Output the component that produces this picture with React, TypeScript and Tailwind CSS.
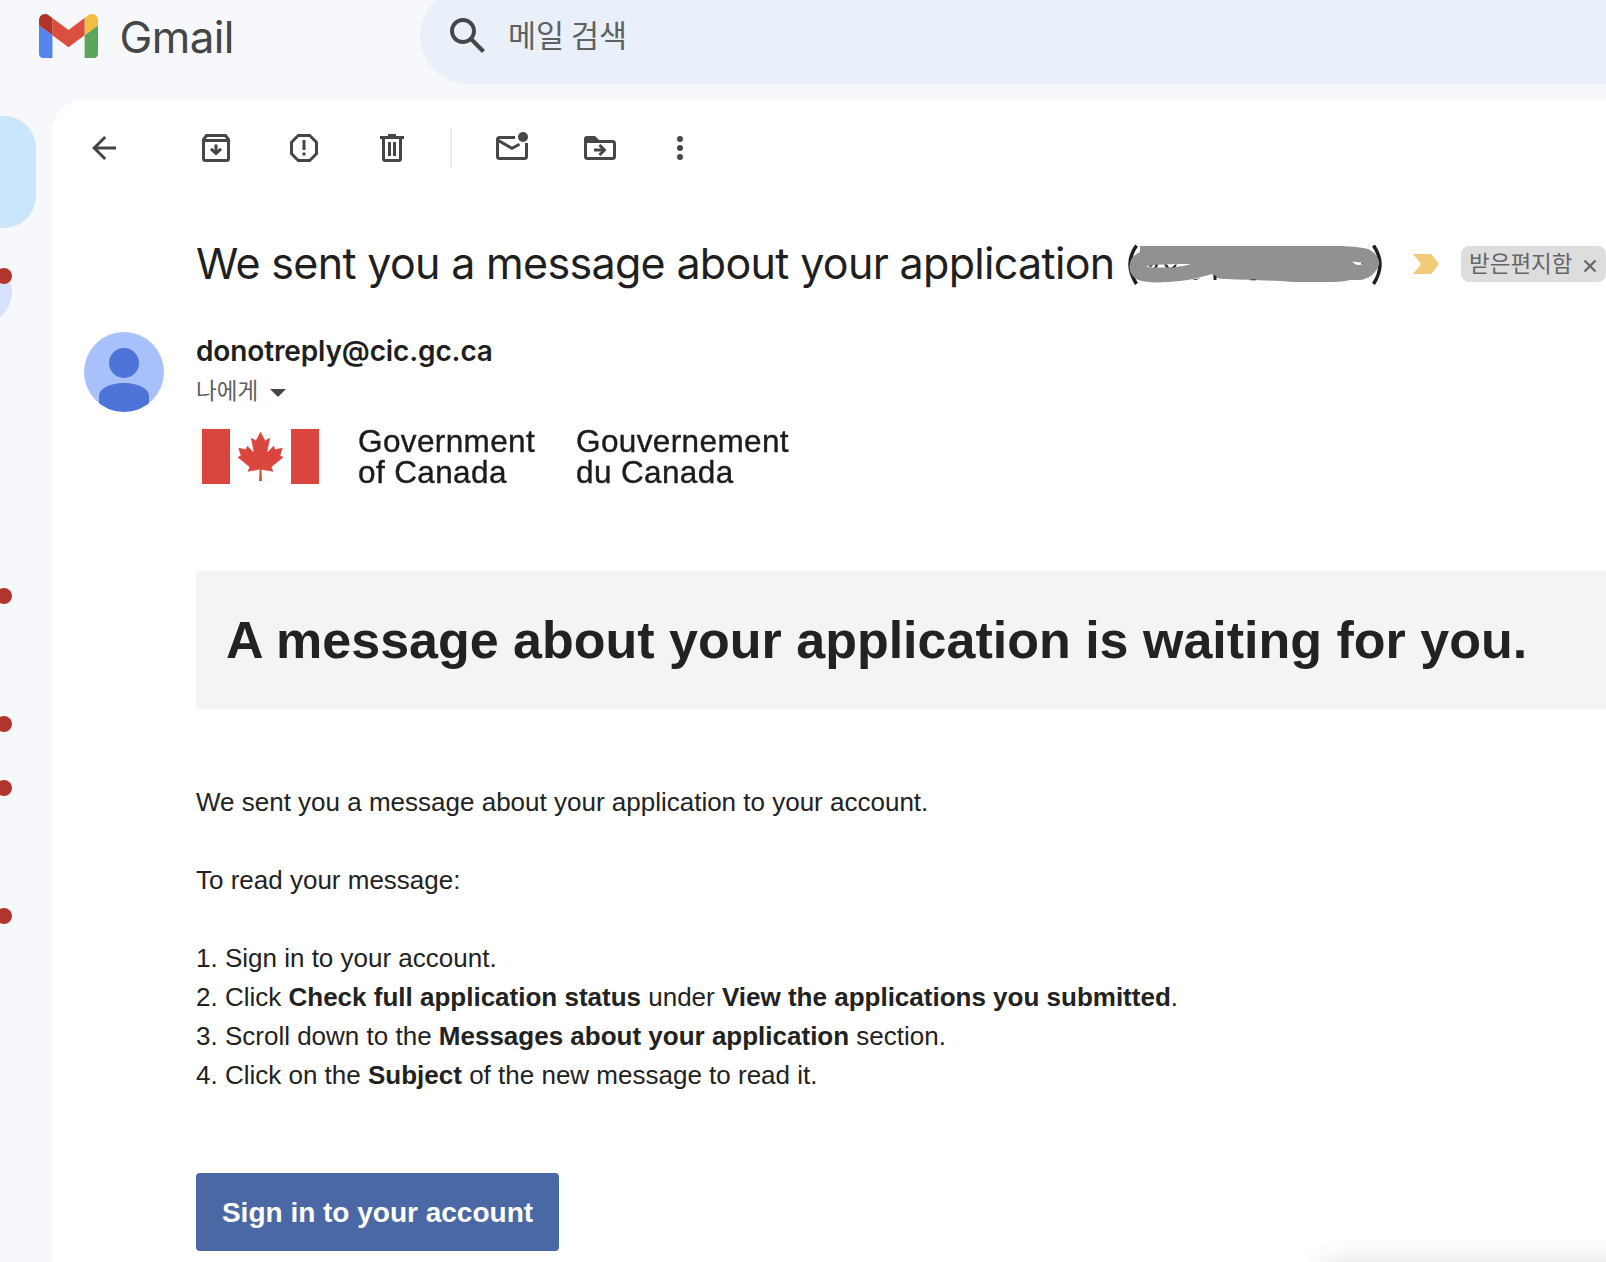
// Gmail message view: cropped sidebar, search bar, toolbar and the IRCC notification mail
import type { ReactNode } from 'react'
import clsx from 'clsx'

// ─── Data ────────────────────────────────────────────────────────────────────

// rows of the collapsed rail that carry an unread dot
const railRows = [true, false, false, false, false, true, false, true, true, false, true]

const steps: ReactNode[] = [
  <>Sign in to your account.</>,
  <>Click <b>Check full application status</b> under <b>View the applications you submitted</b>.</>,
  <>Scroll down to the <b>Messages about your application</b> section.</>,
  <>Click on the <b>Subject</b> of the new message to read it.</>,
]

// ─── Icons ───────────────────────────────────────────────────────────────────

function Icon({ children, label }: { children: ReactNode; label: string }) {
  return (
    <button aria-label={label} className="h-10 w-10 shrink-0 text-[#444746]">
      <svg viewBox="0 0 40 40" className="h-10 w-10 overflow-visible" fill="none" stroke="currentColor" strokeWidth="3">
        {children}
      </svg>
    </button>
  )
}

function GmailLogo() {
  return (
    <svg viewBox="52 42 88 66" className="h-11 w-[59px]" preserveAspectRatio="none">
      <path fill="#5585ee" d="M58 108h14V74L52 59v43c0 3.32 2.69 6 6 6" />
      <path fill="#5ca55c" d="M120 108h14c3.32 0 6-2.69 6-6V59l-20 15" />
      <path fill="#f2bf41" d="M120 48v26l20-15v-8c0-7.42-8.47-11.65-14.4-7.2" />
      <path fill="#da4f3f" d="M72 74V48l24 18 24-18v26L96 92" />
      <path fill="#b23328" d="M52 51v8l20 15V48l-5.6-4.2c-5.94-4.45-14.4-.22-14.4 7.2" />
    </svg>
  )
}

function Flag() {
  return (
    <div className="flex h-[55px] w-[117px] items-center justify-between bg-white blur-[0.4px]">
      <div className="h-full w-7 bg-[#da453e]" />
      <svg viewBox="540 370 3720 4060" className="h-[49px] w-[45px]" fill="#da453e" stroke="#da453e" strokeWidth="60">
        <path d="m2490 4430-45-863a95 95 0 0 1 111-98l859 151-116-320a65 65 0 0 1 20-73l941-762-212-99a65 65 0 0 1-34-79l186-572-542 115a65 65 0 0 1-73-38l-105-247-423 454a65 65 0 0 1-111-57l204-1052-327 189a65 65 0 0 1-91-27l-332-652-332 652a65 65 0 0 1-91 27l-327-189 204 1052a65 65 0 0 1-111 57l-423-454-105 247a65 65 0 0 1-73 38l-542-115 186 572a65 65 0 0 1-34 79l-212 99 941 762a65 65 0 0 1 20 73l-116 320 859-151a95 95 0 0 1 111 98l-45 863z" />
      </svg>
      <div className="h-full w-7 bg-[#da453e]" />
    </div>
  )
}

function Avatar() {
  return (
    <svg viewBox="0 0 80 80" className="h-20 w-20 shrink-0">
      <defs>
        <clipPath id="avatar">
          <circle cx="40" cy="40" r="40" />
        </clipPath>
      </defs>
      <g clipPath="url(#avatar)">
        <rect width="80" height="80" fill="#a8c1fb" />
        <circle cx="40" cy="31" r="15" fill="#4e73d9" />
        <path d="M15 80V64c0-8 12-13 25-13s25 5 25 13v16z" fill="#4e73d9" />
      </g>
    </svg>
  )
}

// application number, scribbled over
function Redacted() {
  return (
    <svg viewBox="0 0 254 40" className="absolute left-0 top-[2px] h-10 w-[254px]">
      <path
        d="M12 0H208C222 0 232 1 240 3C248 7 252 13 251 19C248 27 241 33 232 34H222C214 36 206 36 198 36H165C140 34 118 34 98 33C90 33 86 31 84 28C74 31 62 34 52 35C34 37 19 37 10 34C1 29 0 21 3 14C5 10 8 8 12 6Z"
        fill="#919191"
      />
      <path d="M19 20C33 18 50 18 63 18C50 22 34 22 19 21Z" fill="#fff" />
      <path d="M20 20l5-1-2 2zM28 18.500l-2 3h3l1-3zM36 18.500l2 3h3l-2-3zM47 18.500l-3 3h3l2-3z" fill="#222" />
      <path d="M224 15.500q6 1 11 1q0 2.500-5 2.500q-4-1-6-3.500" fill="#fff" />
      <path d="M85.500 28.500l3 2V34h-3zM64 34l8-2-4 2zM122 33.500h6v.8h-6zM234.500 16l-1.500 2h1.500z" fill="#222" />
    </svg>
  )
}

// ─── Sections ────────────────────────────────────────────────────────────────

function Header() {
  return (
    <header className="flex h-[100px] items-start overflow-hidden bg-[#f6f8fc]">
      <div className="flex w-[420px] shrink-0 items-start pl-[38.5px] pt-[14px]">
        <GmailLogo />
        <span className="ml-[22px] mt-[-2px] font-['Inter','Liberation_Sans',sans-serif] text-[44px] leading-[50px] tracking-[-0.6px] text-[#444746]">
          Gmail
        </span>
      </div>
      <div className="-mt-3 flex h-24 flex-1 items-center rounded-l-full bg-[#e9f0fa] pl-6">
        <svg viewBox="0 0 24 24" className="h-12 w-12 shrink-0" fill="#444746">
          <path d="M20.49 19l-5.73-5.73C15.53 12.2 16 10.91 16 9.5 16 5.91 13.09 3 9.5 3S3 5.91 3 9.5 5.91 16 9.5 16c1.41 0 2.7-.47 3.77-1.24L19 20.49 20.49 19zM5 9.5C5 7.01 7.01 5 9.5 5S14 7.01 14 9.5 11.99 14 9.5 14 5 11.99 5 9.5z" />
        </svg>
        <span className="mb-[5px] ml-4 font-['Noto_Sans_CJK_KR',sans-serif] text-[30.5px] leading-[44px] text-[#5f6161]">메일 검색</span>
      </div>
    </header>
  )
}

function Rail() {
  return (
    <nav className="w-[52px] shrink-0 overflow-hidden bg-[#f6f8fc] pt-4">
      <div className="h-28 w-9 rounded-r-[32px] bg-[#c9e6fd]" />
      <div className="mt-4">
        {railRows.map((unread, i) => (
          <div key={i} className="relative h-16">
            {i === 0 && <div className="absolute -left-[52px] top-4 h-16 w-16 rounded-full bg-[#d6e1fb]" />}
            {unread && <div className="absolute -left-1 top-6 h-4 w-4 rounded-full bg-[#b3352b]" />}
          </div>
        ))}
      </div>
    </nav>
  )
}

function Toolbar() {
  return (
    <div className="flex h-24 items-center pl-8">
      <Icon label="Back">
        <path d="M32 20H10.500M21.200 9L10.200 20l11 11" />
      </Icon>
      <div className="ml-[72px] flex gap-12">
        <Icon label="Archive">
          <path d="M7.5 11.500v19a2 2 0 0 0 2 2h21a2 2 0 0 0 2-2v-19l-3-4H10.500zM7.5 12.500h25M20 16.500v8" />
          <path d="M15 20.800l5 4.700 5-4.700" />
        </Icon>
        <Icon label="Report spam">
          <path d="M14.300 7.500h11.400l6.800 6.800v11.400l-6.800 6.800H14.300l-6.800-6.800V14.300zM20 12v10M20 24.500v3" />
        </Icon>
        <Icon label="Delete">
          <path d="M8 9.500h24M16 7.500h8M11.500 9.500v21a2 2 0 0 0 2 2h13a2 2 0 0 0 2-2v-21M17.500 14v14M22.500 14v14" />
        </Icon>
      </div>
      <div className="ml-[38px] h-10 w-[2px] bg-[#ebebeb]" />
      <div className="ml-10 flex gap-12">
        <Icon label="Mark as unread">
          <path d="M23 9.500H7.500a2 2 0 0 0-2 2v17a2 2 0 0 0 2 2h25a2 2 0 0 0 2-2V15M5.500 12L20 20.300l7.500-4" />
          <circle cx="31" cy="9" r="5" fill="currentColor" stroke="none" />
        </Icon>
        <Icon label="Move to">
          <path d="M5.500 13.500h27a2 2 0 0 1 2 2v13a2 2 0 0 1-2 2h-25a2 2 0 0 1-2-2zM14 22h10" />
          <path d="M19.500 17l5 5-5 5" />
          <path d="M4 14v-3a3 3 0 0 1 3-3h8l4.500 4.500z" fill="currentColor" stroke="none" />
        </Icon>
      </div>
      <div className="ml-10 flex">
        <Icon label="More">
          <g fill="currentColor" stroke="none">
            <circle cx="20" cy="11" r="3" />
            <circle cx="20" cy="20" r="3" />
            <circle cx="20" cy="29" r="3" />
          </g>
        </Icon>
      </div>
    </div>
  )
}

function Subject() {
  return (
    <div className="mt-10 flex h-14 items-center pl-36">
      <h1 className="-mt-[2px] w-[932px] shrink-0 whitespace-nowrap font-['Inter','Liberation_Sans',sans-serif] text-[43px] leading-[56px] tracking-[-0.68px] text-[#1f1f1f]">
        We sent you a message about your application
      </h1>
      <div className="relative mt-1 flex h-11 w-[254px] shrink-0">
        <svg viewBox="0 0 254 44" className="h-11 w-[254px]" fill="none" stroke="#1f1f1f" strokeWidth="3.500">
          <path d="M8.500 1.500Q-4.500 20 8.500 40M245.500 1.500Q258.500 20 245.500 40" />
        </svg>
        <Redacted />
      </div>
      <svg viewBox="0 0 26 20" className="ml-[31px] h-5 w-[26px] shrink-0" fill="#f1cb78">
        <path d="M0 0h18l8 10-8 10H0l8-10z" />
      </svg>
      <div className="ml-[22px] flex h-9 w-[145px] shrink-0 items-center rounded-lg bg-[#ddd] pl-2 text-[#666]">
        <span className="mb-[5px] w-[114px] whitespace-nowrap font-['Noto_Sans_CJK_KR',sans-serif] text-[22.500px] leading-9">받은편지함</span>
        <svg viewBox="0 0 14 14" className="mt-[3px] h-[14px] w-[14px]" stroke="#666" strokeWidth="2.300">
          <path d="M1.500 1.500l11 11M12.500 1.500l-11 11" />
        </svg>
      </div>
    </div>
  )
}

function Sender() {
  return (
    <div className="mt-10 flex h-20 pl-8">
      <Avatar />
      <div className="ml-8">
        <p className="-mt-px font-['Inter','Liberation_Sans',sans-serif] text-[28px] font-semibold leading-10 tracking-[-0.13px] text-[#1f1f1f]">
          donotreply@cic.gc.ca
        </p>
        <div className="flex h-10 items-center">
          <span className="mb-1 font-['Noto_Sans_CJK_KR',sans-serif] text-[22.500px] leading-8 text-[#5e5e5e]">나에게</span>
          <svg viewBox="0 0 16 8" className="ml-3 mt-[3px] h-2 w-4" fill="#444746">
            <path d="M0 0h16L8 8z" />
          </svg>
        </div>
      </div>
    </div>
  )
}

function GovBanner() {
  return (
    <div className="mt-[15px] flex h-[61px] pl-[6px] pt-[2px]">
      <Flag />
      <p className="-mt-[3px] ml-[39px] w-[218px] whitespace-nowrap text-[31.5px] leading-[31px] tracking-[0.38px] text-[#1c1c1c] blur-[0.6px] [-webkit-text-stroke:0.4px_#1c1c1c]">
        Government
        <br />
        of Canada
      </p>
      <p className="-mt-[3px] whitespace-nowrap text-[31.5px] leading-[31px] tracking-[0.38px] text-[#1c1c1c] blur-[0.6px] [-webkit-text-stroke:0.4px_#1c1c1c]">
        Gouvernement
        <br />
        du Canada
      </p>
    </div>
  )
}

function MailBody() {
  return (
    <div className="ml-36 font-['Liberation_Sans',Arial,sans-serif] text-[26px] leading-[39px] text-[#222]">
      <GovBanner />
      <div className="mt-[83px] flex h-[138px] items-center bg-[#f4f4f4] pl-[30px]">
        <h2 className="whitespace-nowrap text-[52px] font-bold leading-[60px]">
          A message about your application is waiting for you.
        </h2>
      </div>
      <p className="mt-[74px]">We sent you a message about your application to your account.</p>
      <p className="mt-[39px]">To read your message:</p>
      <ol className="mt-[39px]">
        {steps.map((step, i) => (
          <li key={i} className={clsx('whitespace-nowrap', i === 3 && 'mb-[78px]')}>
            {i + 1}. {step}
          </li>
        ))}
      </ol>
      <button className="h-[78px] w-[363px] rounded-[4px] bg-[#4a69a4] text-[28px] font-bold text-white">
        Sign in to your account
      </button>
    </div>
  )
}

// ─── Page ────────────────────────────────────────────────────────────────────
export default function App() {
  return (
    <div className="relative flex h-[1262px] w-[1606px] flex-col overflow-hidden bg-[#f6f8fc]">
      <Header />
      <div className="flex flex-1">
        <Rail />
        <main className="flex-1 overflow-hidden rounded-tl-[32px] bg-white">
          <Toolbar />
          <Subject />
          <Sender />
          <MailBody />
        </main>
      </div>
      {/* top shadow of the popup docked below the fold */}
      <div className="absolute -right-10 top-[1268px] h-20 w-[324px] rounded-2xl shadow-[0_0_32px_rgba(0,0,0,0.2)]" />
    </div>
  )
}
